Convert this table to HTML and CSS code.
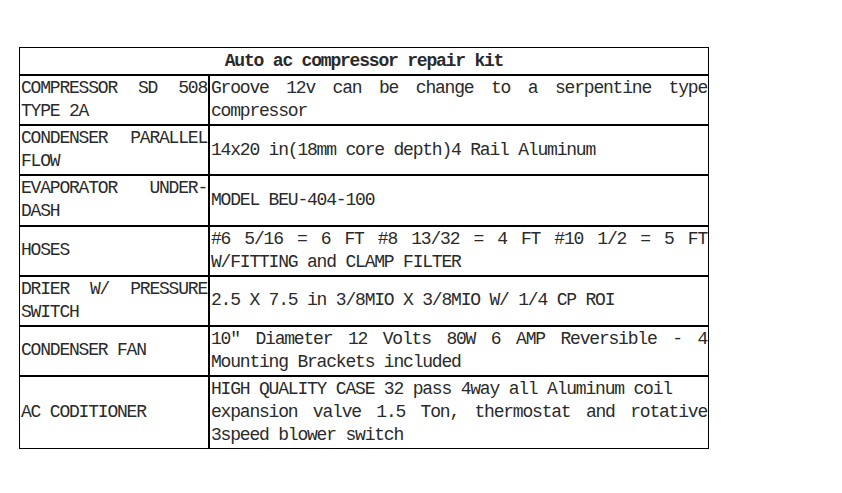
FILE: index.html
```html
<!DOCTYPE html>
<html>
<head>
<meta charset="utf-8">
<link rel="stylesheet" href="styles.css">
</head>
<body>
<div class="page">
<table class="kit">
<tr><th colspan="2" class="title">Auto ac compressor repair kit</th></tr>
<tr><td class="name">COMPRESSOR SD 508 TYPE 2A</td><td class="desc">Groove 12v can be change to a serpentine type compressor</td></tr>
<tr><td class="name">CONDENSER PARALLEL FLOW</td><td class="desc">14x20 in(18mm core depth)4 Rail Aluminum</td></tr>
<tr><td class="name">EVAPORATOR UNDER-DASH</td><td class="desc">MODEL BEU-404-100</td></tr>
<tr><td class="name">HOSES</td><td class="desc">#6 5/16 = 6 FT #8 13/32 = 4 FT #10 1/2 = 5 FT W/FITTING and CLAMP FILTER</td></tr>
<tr><td class="name">DRIER W/ PRESSURE SWITCH</td><td class="desc">2.5 X 7.5 in 3/8MIO X 3/8MIO W/ 1/4 CP ROI</td></tr>
<tr><td class="name">CONDENSER FAN</td><td class="desc">10″ Diameter 12 Volts 80W 6 AMP Reversible - 4 Mounting Brackets included</td></tr>
<tr><td class="name">AC CODITIONER</td><td class="desc">HIGH QUALITY CASE 32 pass 4way all Aluminum coil<br>expansion valve 1.5 Ton, thermostat and rotative 3speed blower switch</td></tr>
</table>
</div>
</body>
</html>
```
FILE: styles.css
```css
html, body {
  margin: 0;
  padding: 0;
  background: #ffffff;
}
.page {
  padding: 47px 0 0 19px;
}
.kit {
  border-collapse: separate;
  border-spacing: 0;
  width: 690px;
  font-family: "Liberation Mono", "DejaVu Sans Mono", monospace;
  font-size: 18px;
  letter-spacing: -1.2px;
  color: #2a2a2a;
  line-height: 23.1px;
}
.kit th, .kit td {
  border: 1px solid #000000;
  padding: 1px 1px;
  vertical-align: middle;
}
.title {
  text-align: center;
  font-weight: bold;
  padding: 0 1px;
  line-height: 24px;
}
.name {
  width: 186px;
  text-align: justify;
}
.desc {
  text-align: justify;
}
```
